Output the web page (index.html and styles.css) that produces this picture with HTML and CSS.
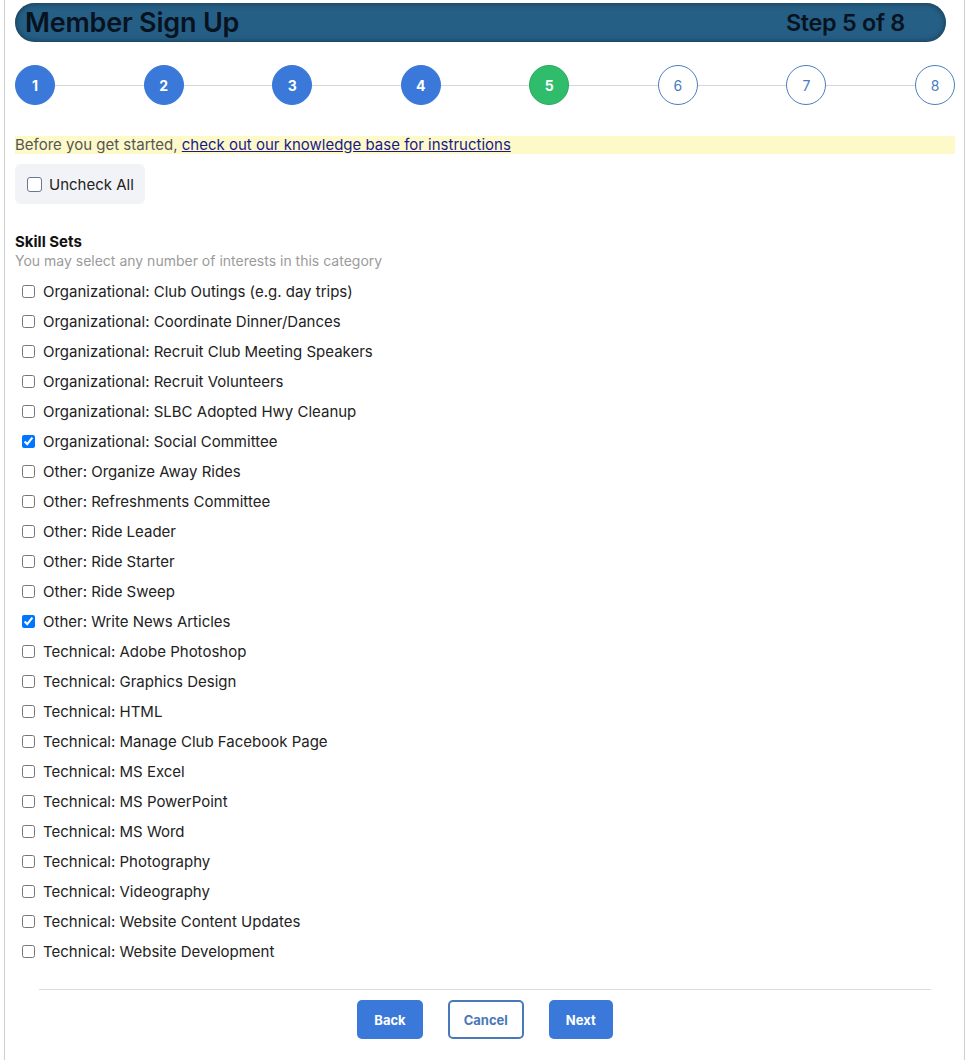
FILE: index.html
```html
<!DOCTYPE html>
<html lang="en">
<head>
    <meta charset="UTF-8">
    <meta name="viewport" content="width=device-width, initial-scale=1.0">
    <title>Member Sign Up - Step 5 of 8</title>
    <link rel="stylesheet" href="styles.css">
</head>
<body>
    <div class="page">
        <div class="title-bar">
            <h1>Member Sign Up</h1>
            <span class="step-count">Step 5 of 8</span>
        </div>

        <div class="stepper">
            <span class="dot done">1</span><span class="bar"></span>
            <span class="dot done">2</span><span class="bar"></span>
            <span class="dot done">3</span><span class="bar"></span>
            <span class="dot done">4</span><span class="bar"></span>
            <span class="dot current">5</span><span class="bar"></span>
            <span class="dot">6</span><span class="bar"></span>
            <span class="dot">7</span><span class="bar"></span>
            <span class="dot">8</span>
        </div>

        <p class="notice">Before you get started, <a href="#">check out our knowledge base for instructions</a></p>

        <label class="uncheck-all"><input type="checkbox"> Uncheck All</label>

        <div class="group">
            <h2>Skill Sets</h2>
            <p class="hint">You may select any number of interests in this category</p>

            <ul class="options">
                <li><label><input type="checkbox"> Organizational: Club Outings (e.g. day trips)</label></li>
                <li><label><input type="checkbox"> Organizational: Coordinate Dinner/Dances</label></li>
                <li><label><input type="checkbox"> Organizational: Recruit Club Meeting Speakers</label></li>
                <li><label><input type="checkbox"> Organizational: Recruit Volunteers</label></li>
                <li><label><input type="checkbox"> Organizational: SLBC Adopted Hwy Cleanup</label></li>
                <li><label><input type="checkbox" checked> Organizational: Social Committee</label></li>
                <li><label><input type="checkbox"> Other: Organize Away Rides</label></li>
                <li><label><input type="checkbox"> Other: Refreshments Committee</label></li>
                <li><label><input type="checkbox"> Other: Ride Leader</label></li>
                <li><label><input type="checkbox"> Other: Ride Starter</label></li>
                <li><label><input type="checkbox"> Other: Ride Sweep</label></li>
                <li><label><input type="checkbox" checked> Other: Write News Articles</label></li>
                <li><label><input type="checkbox"> Technical: Adobe Photoshop</label></li>
                <li><label><input type="checkbox"> Technical: Graphics Design</label></li>
                <li><label><input type="checkbox"> Technical: HTML</label></li>
                <li><label><input type="checkbox"> Technical: Manage Club Facebook Page</label></li>
                <li><label><input type="checkbox"> Technical: MS Excel</label></li>
                <li><label><input type="checkbox"> Technical: MS PowerPoint</label></li>
                <li><label><input type="checkbox"> Technical: MS Word</label></li>
                <li><label><input type="checkbox"> Technical: Photography</label></li>
                <li><label><input type="checkbox"> Technical: Videography</label></li>
                <li><label><input type="checkbox"> Technical: Website Content Updates</label></li>
                <li><label><input type="checkbox"> Technical: Website Development</label></li>
            </ul>
        </div>

        <div class="actions">
            <button class="btn">Back</button>
            <button class="btn btn-outline">Cancel</button>
            <button class="btn">Next</button>
        </div>
    </div>
</body>
</html>
```

FILE: styles.css
```css
body { margin: 0; font-family: Inter, "Noto Sans", Arial, sans-serif; color: #1f2328; background: white; }
.page { margin-left: 4px; width: 940px; min-height: 1060px; padding: 3px 9px 0 10px; border-left: 1px solid #cfcfcf; border-right: 1px solid #cfcfcf; }

.title-bar { display: flex; align-items: center; justify-content: space-between; height: 39px; margin-right: 9px; padding: 0 41px 0 10px; border-radius: 20px; background: #255f86; box-shadow: inset 0 0 6px rgba(0,0,0,0.45); }
.title-bar h1 { margin: 0; font-size: 27px; font-weight: 600; color: #08131f; letter-spacing: -0.2px; }
.step-count { font-size: 23.4px; font-weight: 600; color: #08131f; letter-spacing: -0.3px; }

.stepper { display: flex; align-items: center; margin-top: 23px; }
.dot { flex: none; width: 38px; height: 38px; border: 1px solid #4a7dc0; border-radius: 50%; display: flex; align-items: center; justify-content: center; font-size: 14px; color: #4a7dc0; background: white; }
.dot.done { background: #3a78d9; border-color: #3a78d9; color: white; font-weight: 700; }
.dot.current { background: #2fbd6c; border-color: #27a95e; color: white; font-weight: 700; }
.bar { flex: 1; height: 1px; background: #d3d7dd; }

.notice { margin: 31px 0 0; padding: 0; height: 18px; line-height: 18px; background: #fef9c9; font-size: 15px; color: #555; }
.notice a { color: #1a1a8c; }

.uncheck-all { display: inline-flex; align-items: center; gap: 7px; margin-top: 10px; height: 40px; padding: 0 11px 0 12px; border-radius: 6px; background: #f1f3f6; font-size: 15px; color: #222; }
.uncheck-all input { appearance: none; width: 15px; height: 15px; margin: 0; border: 1.5px solid #6a7794; border-radius: 3px; background: white; }

.group { margin-top: 28px; }
.group h2 { margin: 0; font-size: 15px; font-weight: 700; color: #111; line-height: 19px; }
.hint { margin: 0; font-size: 14px; color: #9b9b9b; line-height: 19px; }

.options { list-style: none; margin: 6px 0 0; padding: 0; }
.options li { height: 30px; display: flex; align-items: center; }
.options label { display: flex; align-items: center; font-size: 15px; color: #222; }
.options input { width: 13px; height: 13px; margin: 0 8px 0 7px; }

.actions { display: flex; justify-content: center; gap: 25px; margin: 23px 24px 0; padding-top: 10px; border-top: 1px solid #dcdcdc; }
.btn { height: 39px; padding: 0 17px; border: none; border-radius: 5px; background: #3a78d9; color: white; font-family: Inter, Arial, sans-serif; font-size: 13px; font-weight: 700; cursor: pointer; }
.btn-outline { padding: 0 14px; background: white; color: #4a78b8; border: 2px solid #4a78b8; }
```
